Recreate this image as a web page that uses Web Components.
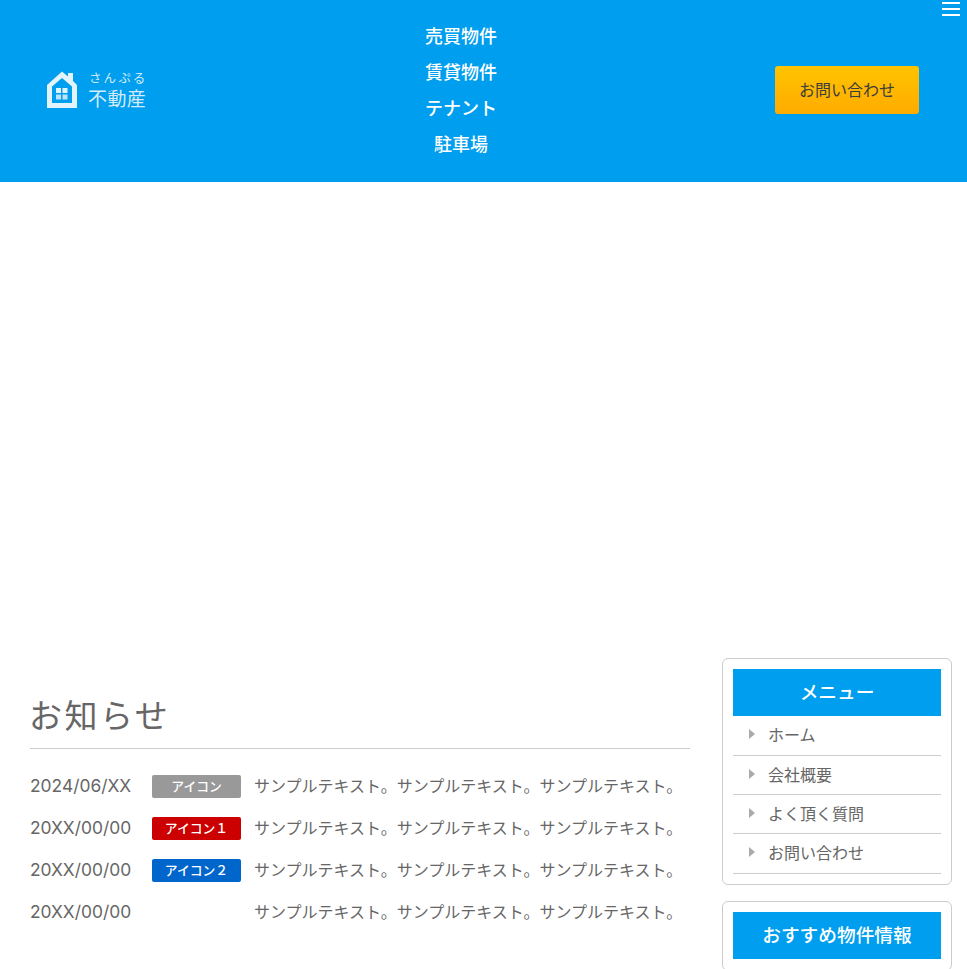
<!DOCTYPE html>
<html lang="ja">
<head>
<meta charset="utf-8">
<title>さんぷる不動産</title>
<style>
    html, body {
        margin: 0;
        height: 969px;
        overflow: hidden;
        background: #fff;
        font-family: "Liberation Sans", "Noto Sans CJK JP", sans-serif;
        color: #666;
    }
</style>
</head>
<body>
<site-header>
    <site-logo slot="logo"></site-logo>
    <nav-link>売買物件</nav-link>
    <nav-link>賃貸物件</nav-link>
    <nav-link>テナント</nav-link>
    <nav-link>駐車場</nav-link>
    <contact-button slot="action">お問い合わせ</contact-button>
</site-header>
<menu-toggle></menu-toggle>
<hero-space></hero-space>
<page-body>
    <news-section heading="お知らせ">
        <news-row date="2024/06/XX" badge="アイコン" tone="gray">サンプルテキスト。サンプルテキスト。サンプルテキスト。</news-row>
        <news-row date="20XX/00/00" badge="アイコン１" tone="red">サンプルテキスト。サンプルテキスト。サンプルテキスト。</news-row>
        <news-row date="20XX/00/00" badge="アイコン２" tone="blue">サンプルテキスト。サンプルテキスト。サンプルテキスト。</news-row>
        <news-row date="20XX/00/00">サンプルテキスト。サンプルテキスト。サンプルテキスト。</news-row>
    </news-section>
    <side-card slot="side" heading="メニュー">
        <side-link>ホーム</side-link>
        <side-link>会社概要</side-link>
        <side-link>よく頂く質問</side-link>
        <side-link>お問い合わせ</side-link>
    </side-card>
    <side-card slot="side" heading="おすすめ物件情報"></side-card>
</page-body>

<script>
const cjk = `"Liberation Sans", "Noto Sans CJK JP", sans-serif`;
const brand = "#009eee";

function shadow(el, html) {
    el.attachShadow({ mode: "open" }).innerHTML = html;
}

class SiteHeader extends HTMLElement {
    constructor() {
        super();
        shadow(this, `
            <style>
                :host {
                    display: flex;
                    justify-content: space-between;
                    align-items: center;
                    box-sizing: border-box;
                    height: 182px;
                    padding: 0 48px 0 47px;
                    background: ${brand};
                }
                nav { display: flex; flex-direction: column; align-items: center; }
            </style>
            <slot name="logo"></slot>
            <nav><slot></slot></nav>
            <slot name="action"></slot>
        `);
    }
}

class SiteLogo extends HTMLElement {
    constructor() {
        super();
        shadow(this, `
            <style>
                :host { display: flex; align-items: center; gap: 11px; width: 100px; color: #d4ecfa; }
                svg { width: 30px; height: 37px; flex: none; margin-bottom: 3px; }
                .txt { display: flex; flex-direction: column; align-items: flex-start; margin-top: 1px; font-family: ${cjk}; white-space: nowrap; }
                .kana { font-size: 12.500px; line-height: 16px; letter-spacing: 2.100px; margin-left: 1px; }
                .name { font-size: 19px; line-height: 26px; letter-spacing: 0.400px; }
            </style>
            <svg viewBox="0 0 30 37">
                <path fill="#e3f3fc" fill-rule="evenodd" d="M15 0.500 L21 5.500 V2 H26 V10 L30 14 V37 H0 V14 Z M15 7 L5 15.500 V32 H25 V15.500 Z"/>
                <path fill="#e3f3fc" d="M9 17 h5 v5 h-5z M15.500 17 h5 v5 h-5z"/>
                <path fill="#bfe4f9" d="M9 23.500 h5 v5 h-5z M15.500 23.500 h5 v5 h-5z"/>
            </svg>
            <div class="txt"><span class="kana">さんぷる</span><span class="name">不動産</span></div>
        `);
    }
}

class NavLink extends HTMLElement {
    constructor() {
        super();
        shadow(this, `
            <style>
                :host { display: block; font: 500 18px/36px ${cjk}; color: #fff; white-space: nowrap; }
            </style>
            <slot></slot>
        `);
    }
}

class ContactButton extends HTMLElement {
    constructor() {
        super();
        shadow(this, `
            <style>
                :host {
                    display: flex;
                    align-items: center;
                    justify-content: center;
                    box-sizing: border-box;
                    width: 144px;
                    height: 48px;
                    margin-bottom: 2px;
                    padding-bottom: 2px;
                    border-radius: 3px;
                    background: linear-gradient(#ffc400, #ffab00);
                    color: #3d3d3d;
                    font: 16px ${cjk};
                }
            </style>
            <slot></slot>
        `);
    }
}

class MenuToggle extends HTMLElement {
    constructor() {
        super();
        shadow(this, `
            <style>
                :host {
                    position: fixed;
                    top: 2px;
                    right: 7px;
                    width: 18px;
                    height: 14px;
                    display: flex;
                    flex-direction: column;
                    justify-content: space-between;
                }
                i { display: block; height: 2px; background: #fff; }
            </style>
            <i></i><i></i><i></i>
        `);
    }
}

class HeroSpace extends HTMLElement {
    constructor() {
        super();
        shadow(this, `<style>:host { display: block; height: 476px; background: #fff; }</style>`);
    }
}

class PageBody extends HTMLElement {
    constructor() {
        super();
        shadow(this, `
            <style>
                :host {
                    display: flex;
                    justify-content: space-between;
                    align-items: flex-start;
                    padding: 0 15px 0 30px;
                }
                main { width: 660px; flex: none; }
                aside { width: 230px; flex: none; display: flex; flex-direction: column; gap: 16px; }
            </style>
            <main><slot></slot></main>
            <aside><slot name="side"></slot></aside>
        `);
    }
}

class NewsSection extends HTMLElement {
    constructor() {
        super();
        shadow(this, `
            <style>
                :host { display: block; padding-top: 36px; }
                h2 {
                    margin: 0 0 16px;
                    padding-bottom: 9px;
                    border-bottom: 1px solid #ccc;
                    font: 400 33px/45px ${cjk};
                    letter-spacing: 2.500px;
                    color: #666;
                }
                h2 span { margin-left: -1px; }
            </style>
            <h2><span>${this.getAttribute("heading")}</span></h2>
            <slot></slot>
        `);
    }
}

class NewsRow extends HTMLElement {
    constructor() {
        super();
        const badge = this.getAttribute("badge");
        const tone = this.getAttribute("tone") || "";
        shadow(this, `
            <style>
                :host {
                    display: grid;
                    grid-template-columns: 122px 89px 1fr;
                    align-items: center;
                    height: 42px;
                    color: #666;
                    font: 16px ${cjk};
                    white-space: nowrap;
                }
                .date { padding-bottom: 2px; font-family: Inter, ${cjk}; font-size: 17.400px; }
                .badge {
                    height: 23px;
                    border-radius: 2px;
                    color: #fff;
                    font-size: 12.800px;
                    line-height: 23px;
                    font-weight: 500;
                    text-align: center;
                }
                .gray { background: #999; }
                .red { background: #cc0000; }
                .blue { background: #0066cc; }
                .text { padding: 0 0 2px 13px; }
            </style>
            <span class="date">${this.getAttribute("date")}</span>
            ${badge ? `<span class="badge ${tone}">${badge}</span>` : "<span></span>"}
            <span class="text"><slot></slot></span>
        `);
    }
}

class SideCard extends HTMLElement {
    constructor() {
        super();
        shadow(this, `
            <style>
                :host {
                    display: block;
                    box-sizing: border-box;
                    padding: 10px 10px 10.200px;
                    border: 1px solid #ccc;
                    border-radius: 6px;
                    background: #fff;
                }
                h3 {
                    margin: 0 0 0.500px;
                    height: 47px;
                    background: ${brand};
                    color: #fff;
                    font: 500 18.700px/47px ${cjk};
                    text-align: center;
                }
            </style>
            <h3>${this.getAttribute("heading")}</h3>
            <slot></slot>
        `);
    }
}

class SideLink extends HTMLElement {
    constructor() {
        super();
        shadow(this, `
            <style>
                :host {
                    display: flex;
                    align-items: center;
                    box-sizing: border-box;
                    height: 39.300px;
                    padding: 0 0 2.800px 16px;
                    border-bottom: 1px solid #ccc;
                    color: #666;
                    font: 16px ${cjk};
                }
                .arrow {
                    width: 0;
                    height: 0;
                    margin-right: 13px;
                    border-left: 6px solid #aaa;
                    border-top: 5px solid transparent;
                    border-bottom: 5px solid transparent;
                }
            </style>
            <span class="arrow"></span><slot></slot>
        `);
    }
}

customElements.define("site-header", SiteHeader);
customElements.define("site-logo", SiteLogo);
customElements.define("nav-link", NavLink);
customElements.define("contact-button", ContactButton);
customElements.define("menu-toggle", MenuToggle);
customElements.define("hero-space", HeroSpace);
customElements.define("page-body", PageBody);
customElements.define("news-section", NewsSection);
customElements.define("news-row", NewsRow);
customElements.define("side-card", SideCard);
customElements.define("side-link", SideLink);
</script>
</body>
</html>
